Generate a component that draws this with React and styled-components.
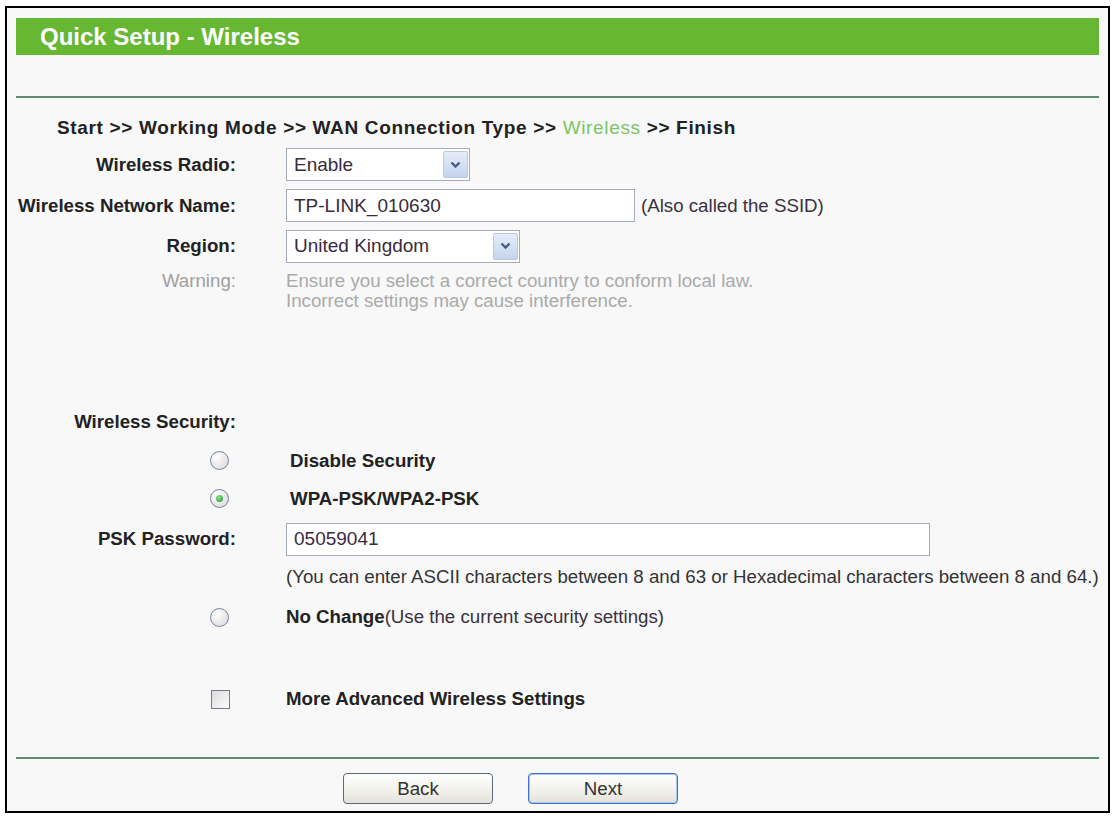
import React from 'react'
import styled, { createGlobalStyle } from 'styled-components'

const GlobalStyle = createGlobalStyle`
  body {
    margin: 0;
    background: #fff;
    font-family: "Liberation Sans", Arial, sans-serif;
  }
`

const Frame = styled.div`
  box-sizing: border-box;
  margin: 6px 0 0 5px;
  width: 1105px;
  height: 807px;
  border: 2px solid #000;
  background: #f8f8f8;
  padding: 10px 9px 0 9px;
  display: flex;
  flex-direction: column;
  overflow: hidden;
`

const Header = styled.div`
  height: 37px;
  background: #66b732;
  color: #fff;
  font-size: 24px;
  font-weight: 700;
  line-height: 37px;
  padding-left: 24px;
`

const Divider = styled.div`
  height: 2px;
  background: #5b8c6f;
  margin-top: ${p => p.$top}px;
`

const Crumbs = styled.div`
  height: 35px;
  margin-top: 12px;
  padding-left: 41px;
  display: flex;
  align-items: center;
  font-size: 19px;
  font-weight: 700;
  letter-spacing: 0.65px;
  color: #222;
`

const Current = styled.span`
  color: #7cc566;
  font-weight: 400;
  margin: 0 6px;
`

const Row = styled.div`
  display: grid;
  grid-template-columns: 220px 1fr;
  column-gap: 50px;
  align-items: ${p => (p.$top ? 'start' : 'center')};
  height: ${p => p.$h}px;
  margin-top: ${p => p.$mt || 0}px;
  font-size: 18.7px;
  color: #333;
`

const Label = styled.div`
  text-align: right;
  font-weight: 700;
  color: ${p => (p.$muted ? '#a0a0a0' : '#222')};
  ${p => p.$muted && 'font-weight: 400; padding-top: 6px; line-height: 20px;'}
  white-space: nowrap;
`

const Value = styled.div`
  display: flex;
  align-items: center;
  gap: 6px;
  white-space: nowrap;
`

const Note = styled.div`
  color: #aaa;
  line-height: 20px;
  padding-top: 6px;
`

const SelectBox = styled.div`
  box-sizing: border-box;
  width: ${p => p.$w}px;
  height: 33px;
  border: 1px solid #a3acb8;
  background: #fff;
  display: flex;
  align-items: center;
  justify-content: space-between;
  padding: 0 1px 0 7px;
  font-size: 19px;
  color: #3a2a40;
`

const ArrowButton = styled.div`
  box-sizing: border-box;
  width: 25px;
  height: 27px;
  border: 1px solid #b9c7df;
  border-radius: 2px;
  background: linear-gradient(#e6edf9, #c5d4ee);
  display: flex;
  align-items: center;
  justify-content: center;
`

const TextBox = styled.div`
  box-sizing: border-box;
  width: ${p => p.$w}px;
  height: 33px;
  border: 1px solid #a3acb8;
  background: #fff;
  display: flex;
  align-items: center;
  padding-left: 7px;
  font-size: 19px;
  color: #3a2a40;
`

const Aside = styled.span`
  color: #3a3040;
  font-weight: 400;
`

const Radio = styled.span`
  justify-self: end;
  margin-right: 7px;
  box-sizing: border-box;
  width: 19px;
  height: 19px;
  border-radius: 50%;
  border: 1.5px solid #74869c;
  background: radial-gradient(circle at 35% 30%, #fff, #d6d6d6);
  display: flex;
  align-items: center;
  justify-content: center;

  &::after {
    content: '';
    display: ${p => (p.$on ? 'block' : 'none')};
    width: 7px;
    height: 7px;
    border-radius: 50%;
    background: radial-gradient(circle at 40% 35%, #8de48a, #1f9a2a);
  }
`

const Check = styled.span`
  justify-self: end;
  margin-right: 6px;
  box-sizing: border-box;
  width: 19px;
  height: 19px;
  border: 1.5px solid #6f7c8b;
  background: linear-gradient(135deg, #dcdcdc, #fbfbfb);
`

const Strong = styled.span`
  font-weight: 700;
  color: #222;
  padding-left: ${p => p.$pl || 0}px;
`

const Buttons = styled.div`
  display: flex;
  gap: 35px;
  padding-left: 327px;
  margin-top: 14px;
`

const Button = styled.button`
  box-sizing: border-box;
  width: 150px;
  height: 31px;
  border-radius: 4px;
  border: 1px solid ${p => (p.$primary ? '#3f73c4' : '#5b6b7c')};
  box-shadow: ${p => (p.$primary ? 'inset 0 0 0 1px #a9c4ee' : 'none')};
  background: linear-gradient(#ffffff, #f1f0ea 60%, #e3e1d8);
  font-family: "Liberation Sans", Arial, sans-serif;
  font-size: 18.7px;
  color: #333;
  padding: 0;
`

const Chevron = () => (
  <svg width="11" height="8" viewBox="0 0 11 8">
    <path d="M1.5 1.5 L5.5 5.5 L9.5 1.5" fill="none" stroke="#4a5d80" strokeWidth="2.4" />
  </svg>
)

const Select = ({ width, value }) => (
  <SelectBox $w={width}>
    <span>{value}</span>
    <ArrowButton>
      <Chevron />
    </ArrowButton>
  </SelectBox>
)

export default function App() {
  return (
    <>
      <GlobalStyle />
      <Frame>
        <Header>Quick Setup - Wireless</Header>
        <Divider $top={41} />
        <Crumbs>
          Start &gt;&gt; Working Mode &gt;&gt; WAN Connection Type &gt;&gt;
          <Current>Wireless</Current>
          &gt;&gt; Finish
        </Crumbs>

        <Row $h={39}>
          <Label>Wireless Radio:</Label>
          <Value>
            <Select width={184} value="Enable" />
          </Value>
        </Row>
        <Row $h={43}>
          <Label>Wireless Network Name:</Label>
          <Value>
            <TextBox $w={349}>TP-LINK_010630</TextBox>
            <Aside>(Also called the SSID)</Aside>
          </Value>
        </Row>
        <Row $h={38}>
          <Label>Region:</Label>
          <Value>
            <Select width={234} value="United Kingdom" />
          </Value>
        </Row>
        <Row $h={46} $top>
          <Label $muted>Warning:</Label>
          <Note>
            Ensure you select a correct country to conform local law.
            <br />
            Incorrect settings may cause interference.
          </Note>
        </Row>

        <Row $h={40} $mt={91}>
          <Label>Wireless Security:</Label>
          <div />
        </Row>
        <Row $h={37}>
          <Radio />
          <Strong $pl={4}>Disable Security</Strong>
        </Row>
        <Row $h={39}>
          <Radio $on />
          <Strong $pl={4}>WPA-PSK/WPA2-PSK</Strong>
        </Row>
        <Row $h={42}>
          <Label>PSK Password:</Label>
          <Value>
            <TextBox $w={644}>05059041</TextBox>
          </Value>
        </Row>
        <Row $h={34}>
          <div />
          <Value>
            (You can enter ASCII characters between 8 and 63 or Hexadecimal characters between 8 and 64.)
          </Value>
        </Row>
        <Row $h={46}>
          <Radio />
          <Value>
            <Strong>
              No Change<Aside>(Use the current security settings)</Aside>
            </Strong>
          </Value>
        </Row>
        <Row $h={38} $mt={40}>
          <Check />
          <Strong>More Advanced Wireless Settings</Strong>
        </Row>

        <Divider $top={39} />
        <Buttons>
          <Button>Back</Button>
          <Button $primary>Next</Button>
        </Buttons>
      </Frame>
    </>
  )
}
